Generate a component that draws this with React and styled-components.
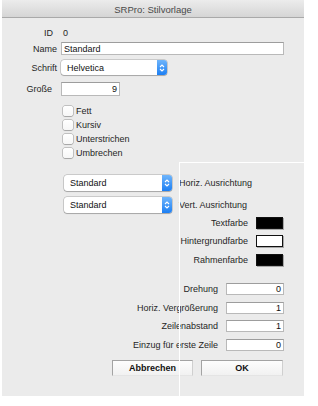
import React from "react";
import styled, { createGlobalStyle } from "styled-components";

const Global = createGlobalStyle`
  html, body { margin: 0; padding: 0; background: #ffffff; }
  * { box-sizing: border-box; }
`;

const Window = styled.div`
  width: 302px;
  height: 396px;
  margin-left: 2px;
  background: #ebebeb;
  position: relative;
  display: flex;
  flex-direction: column;
  font-family: "Liberation Sans", Arial, sans-serif;
  font-size: 9px;
  color: #262626;
`;

const TitleBar = styled.div`
  height: 18px;
  flex: none;
  border-bottom: 1px solid #a9a9a9;
  background: linear-gradient(#ececec, #d5d5d5);
  display: flex;
  align-items: center;
  justify-content: center;
  font-size: 9.5px;
  color: #4a4a4a;
  padding-top: 2px;
`;

const Body = styled.div`
  display: flex;
  flex-direction: column;
`;

const Row = styled.div`
  display: flex;
  align-items: center;
  height: ${(p) => p.h}px;
  margin-top: ${(p) => p.mt}px;
  justify-content: ${(p) => (p.end ? "flex-end" : "flex-start")};
  padding-right: ${(p) => p.pr || 0}px;
  padding-left: ${(p) => p.pl || 0}px;
`;

const Label = styled.span`
  width: ${(p) => p.w}px;
  margin-right: ${(p) => p.gap}px;
  text-align: right;
  white-space: nowrap;
  flex: none;
`;

const Value = styled.span`
  padding-left: 2px;
`;

const TextField = styled.div`
  width: ${(p) => p.w}px;
  height: ${(p) => p.h}px;
  background: #ffffff;
  border: 1px solid #b9b9b9;
  border-top-color: #9d9d9d;
  display: flex;
  align-items: center;
  justify-content: ${(p) => (p.right ? "flex-end" : "flex-start")};
  padding: 0 2px;
  color: #111;
  font-size: 9px;
`;

const Popup = styled.div`
  width: ${(p) => p.w}px;
  height: ${(p) => p.h}px;
  background: #ffffff;
  border-radius: 3px;
  box-shadow: 0 0 0 0.5px rgba(0, 0, 0, 0.28), 0 1px 1px rgba(0, 0, 0, 0.18);
  display: flex;
  align-items: center;
  overflow: hidden;
  flex: none;
`;

const PopupText = styled.span`
  flex: 1;
  padding-left: ${(p) => p.pl}px;
  color: #111;
`;

const Stepper = styled.div`
  width: 10px;
  height: 100%;
  background: linear-gradient(#6fb5fb, #1c7ff3);
  display: flex;
  align-items: center;
  justify-content: center;
`;

const CheckList = styled.div`
  display: flex;
  flex-direction: column;
  margin-top: 8px;
`;

const CheckRow = styled.label`
  display: flex;
  align-items: center;
  height: 14px;
  padding-left: 61px;
  color: #262626;
`;

const Box = styled.span`
  width: 10px;
  height: 10px;
  border-radius: 2px;
  background: linear-gradient(#ffffff, #f6f6f6);
  box-shadow: 0 0 0 0.5px rgba(0, 0, 0, 0.35), 0 0.5px 1px rgba(0, 0, 0, 0.15);
  margin-right: 3px;
  flex: none;
`;

const SideLabel = styled.span`
  margin-left: 7px;
  color: #262626;
  white-space: nowrap;
`;

const Well = styled.div`
  width: 27px;
  height: 12px;
  background: ${(p) => p.color};
  border: 1px solid #111;
  box-shadow: 1px 1px 0 #a8a8a8;
`;

const Button = styled.div`
  width: ${(p) => p.w}px;
  height: 16px;
  background: linear-gradient(#fdfdfd, #f1f1f1);
  border: 1px solid #a3a3a3;
  border-bottom-color: #e4e4e4;
  border-right-color: #cfcfcf;
  display: flex;
  align-items: center;
  justify-content: center;
  font-weight: bold;
  color: #111;
  margin-left: ${(p) => p.ml || 0}px;
`;

const Overlay = styled.div`
  position: absolute;
  left: 177px;
  top: 162px;
  right: 0;
  bottom: -1px;
  border-left: 1px solid #ffffff;
  border-top: 1px solid #ffffff;
  pointer-events: none;
`;

const Arrows = () => (
  <svg width="8" height="12" viewBox="0 0 8 12">
    <path d="M2 5 L4 3 L6 5" fill="none" stroke="#fff" strokeWidth="1.1" />
    <path d="M2 7 L4 9 L6 7" fill="none" stroke="#fff" strokeWidth="1.1" />
  </svg>
);

const PopupButton = ({ w, h, pl, children }) => (
  <Popup w={w} h={h}>
    <PopupText pl={pl}>{children}</PopupText>
    <Stepper>
      <Arrows />
    </Stepper>
  </Popup>
);

const styles = ["Fett", "Kursiv", "Unterstrichen", "Umbrechen"];

const colors = [
  { label: "Textfarbe", color: "#000000", mt: 4 },
  { label: "Hintergrundfarbe", color: "#ffffff", mt: 6 },
  { label: "Rahmenfarbe", color: "#000000", mt: 7 },
];

const numbers = [
  { label: "Drehung", value: "0", mt: 17 },
  { label: "Horiz. Vergrößerung", value: "1", mt: 7 },
  { label: "Zeilenabstand", value: "1", mt: 6 },
  { label: "Einzug für erste Zeile", value: "0", mt: 7 },
];

export default function App() {
  return (
    <>
      <Global />
      <Window>
        <TitleBar>SRPro: Stilvorlage</TitleBar>
        <Body>
          <Row h={12} mt={9}>
            <Label w={51} gap={8}>ID</Label>
            <Value>0</Value>
          </Row>
          <Row h={13} mt={3}>
            <Label w={55} gap={4}>Name</Label>
            <TextField w={223} h={13}>Standard</TextField>
          </Row>
          <Row h={15} mt={5}>
            <Label w={55} gap={4}>Schrift</Label>
            <PopupButton w={106} h={15} pl={6}>Helvetica</PopupButton>
          </Row>
          <Row h={14} mt={7}>
            <Label w={50} gap={9}>Große</Label>
            <TextField w={59} h={14} right>9</TextField>
          </Row>

          <CheckList>
            {styles.map((s) => (
              <CheckRow key={s}>
                <Box />
                {s}
              </CheckRow>
            ))}
          </CheckList>

          <Row h={16} mt={15} pl={62}>
            <PopupButton w={108} h={16} pl={6}>Standard</PopupButton>
            <SideLabel>Horiz. Ausrichtung</SideLabel>
          </Row>
          <Row h={16} mt={6} pl={62}>
            <PopupButton w={108} h={16} pl={6}>Standard</PopupButton>
            <SideLabel>Vert. Ausrichtung</SideLabel>
          </Row>

          {colors.map((c) => (
            <Row key={c.label} h={12} mt={c.mt} end pr={21}>
              <Label w={120} gap={8}>{c.label}</Label>
              <Well color={c.color} />
            </Row>
          ))}

          {numbers.map((n) => (
            <Row key={n.label} h={12} mt={n.mt} end pr={20}>
              <Label w={120} gap={8}>{n.label}</Label>
              <TextField w={58} h={12} right>{n.value}</TextField>
            </Row>
          ))}

          <Row h={16} mt={9} end pr={21}>
            <Button w={81}>Abbrechen</Button>
            <Button w={82} ml={8}>OK</Button>
          </Row>
        </Body>
        <Overlay />
      </Window>
    </>
  );
}
